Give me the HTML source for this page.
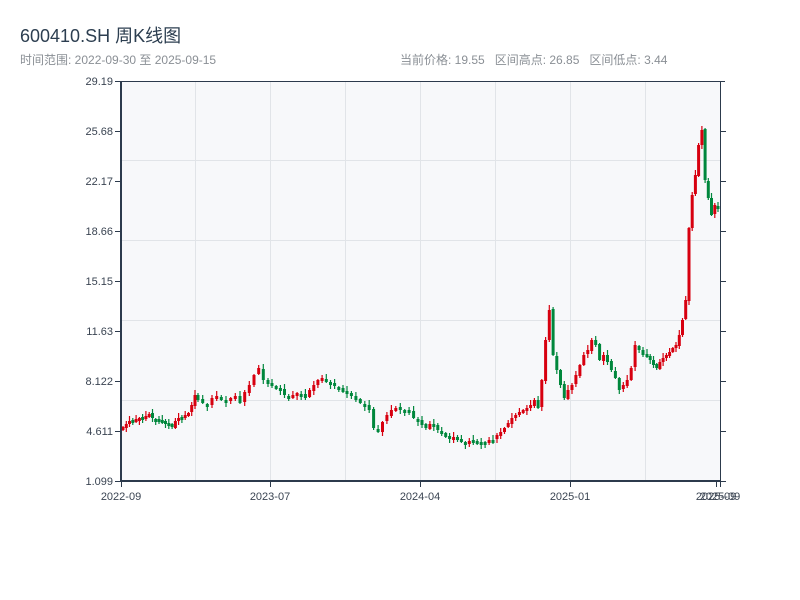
<!DOCTYPE html>
<html><head><meta charset="utf-8"><style>
body{margin:0;width:800px;height:600px;background:#fff;overflow:hidden;font-family:"Liberation Sans","Noto Sans CJK SC",sans-serif;}
.t{position:absolute;left:20px;top:22px;font-size:18px;color:#2c3e50;}
.s{position:absolute;top:51px;font-size:12px;color:#8a8f95;}
</style></head><body>
<div class="t">600410.SH 周K线图</div>
<div class="s" style="left:20px">时间范围: 2022-09-30 至 2025-09-15</div>
<div class="s" style="left:400px">当前价格: 19.55&nbsp;&nbsp; 区间高点: 26.85&nbsp;&nbsp; 区间低点: 3.44</div>
<svg id="c" width="800" height="600" style="position:absolute;left:0;top:0" font-family="Liberation Sans, sans-serif" font-size="11" fill="#3a4452">
<rect x="121" y="81" width="599" height="400" fill="#f7f8fa"/>
<g stroke="#e1e4e8" stroke-width="1">
<line x1="195.5" y1="81" x2="195.5" y2="481"/><line x1="270.5" y1="81" x2="270.5" y2="481"/><line x1="345.5" y1="81" x2="345.5" y2="481"/><line x1="420.5" y1="81" x2="420.5" y2="481"/><line x1="495.5" y1="81" x2="495.5" y2="481"/><line x1="570.5" y1="81" x2="570.5" y2="481"/><line x1="645.5" y1="81" x2="645.5" y2="481"/>
<line x1="121" y1="160.5" x2="720" y2="160.5"/><line x1="121" y1="240.5" x2="720" y2="240.5"/><line x1="121" y1="320.5" x2="720" y2="320.5"/><line x1="121" y1="400.5" x2="720" y2="400.5"/>
</g>
<g id="k"></g>
<g stroke="#2c3a4c">
<line x1="121" y1="81.5" x2="725" y2="81.5" stroke-width="1"/>
<line x1="121" y1="81" x2="121" y2="482" stroke-width="2"/>
<line x1="120" y1="481" x2="721" y2="481" stroke-width="2"/>
<line x1="720.5" y1="81" x2="720.5" y2="482" stroke-width="1"/>
<line x1="115" y1="81.5" x2="121" y2="81.5"/><line x1="115" y1="131.5" x2="121" y2="131.5"/><line x1="115" y1="181.5" x2="121" y2="181.5"/><line x1="115" y1="231.5" x2="121" y2="231.5"/><line x1="115" y1="281.5" x2="121" y2="281.5"/><line x1="115" y1="331.5" x2="121" y2="331.5"/><line x1="115" y1="381.5" x2="121" y2="381.5"/><line x1="115" y1="431.5" x2="121" y2="431.5"/><line x1="115" y1="481.5" x2="121" y2="481.5"/>
<line x1="720" y1="131.5" x2="726" y2="131.5"/><line x1="720" y1="181.5" x2="726" y2="181.5"/><line x1="720" y1="231.5" x2="726" y2="231.5"/><line x1="720" y1="281.5" x2="726" y2="281.5"/><line x1="720" y1="331.5" x2="726" y2="331.5"/><line x1="720" y1="381.5" x2="726" y2="381.5"/><line x1="720" y1="431.5" x2="726" y2="431.5"/><line x1="720" y1="481.5" x2="726" y2="481.5"/>
<line x1="121.5" y1="481" x2="121.5" y2="487"/><line x1="270.5" y1="481" x2="270.5" y2="487"/><line x1="420.5" y1="481" x2="420.5" y2="487"/><line x1="570.5" y1="481" x2="570.5" y2="487"/><line x1="716.5" y1="481" x2="716.5" y2="487"/><line x1="720.5" y1="481" x2="720.5" y2="487"/>
</g>
<g text-anchor="end">
<text x="113" y="85">29.19</text><text x="113" y="135">25.68</text><text x="113" y="185">22.17</text><text x="113" y="235">18.66</text><text x="113" y="285">15.15</text><text x="113" y="335">11.63</text><text x="113" y="385">8.122</text><text x="113" y="435">4.611</text><text x="113" y="485">1.099</text>
</g>
<g text-anchor="middle">
<text x="121" y="500">2022-09</text><text x="270" y="500">2023-07</text><text x="420" y="500">2024-04</text><text x="570" y="500">2025-01</text><text x="716" y="500">2025-09</text><text x="720" y="500">2025-09</text>
</g>
</svg>
<script>
var segs=[
[123,195,[427,424,421,420,419,418,417,416,414,418,419,421,420,423,425,427,421,418,417,415,413,405,395]],
[198,268,[400,403,405,398,396,400,402,398,396,403,392,385,375,368,380,384]],
[272,343,[385,388,390,395,398,395,393,394,398,390,385,380,378,382,384,386,388,392]],
[347,418,[392,396,400,403,405,410,428,432,422,415,410,408,409,410,412,418,420]],
[422,493,[425,428,424,426,430,433,437,438,437,440,441,442,441,440,442,443,442,440,440]],
[497,568,[435,432,428,423,418,415,412,410,408,405,400,408,380,340,310,355,370,385,398,390]],
[572,643,[385,375,365,355,350,340,345,360,355,362,370,378,390,385,380,368,345,350,355]],
[647,718,[355,360,365,368,362,358,355,352,348,345,335,320,300,228,195,175,145,130,180,198,215,205,207]]];
var h='',p=430,k=0;
segs.forEach(function(s){var a=s[0],b=s[1],v=s[2],m=v.length;
for(var j=0;j<m;j++){var x=m>1?a+(b-a)*j/(m-1):a,o=p+((k*5%3)-1),c=v[j],up=c<o,col=up?'#d7000f':'#00873c';
var t=Math.min(o,c),bb=Math.max(o,c);if(bb-t<3){bb=t+3;}
var hi=t-1-(k*7%5),lo=bb+1+(k*3%4);
h+='<line x1="'+x.toFixed(1)+'" x2="'+x.toFixed(1)+'" y1="'+hi+'" y2="'+lo+'" stroke="'+col+'" stroke-width="1.2"/>';
h+='<rect x="'+(x-1.5).toFixed(1)+'" y="'+t+'" width="3" height="'+(bb-t)+'" fill="'+col+'"/>';p=c;k++;}});
document.getElementById('k').innerHTML=h;
</script>
</body></html>
